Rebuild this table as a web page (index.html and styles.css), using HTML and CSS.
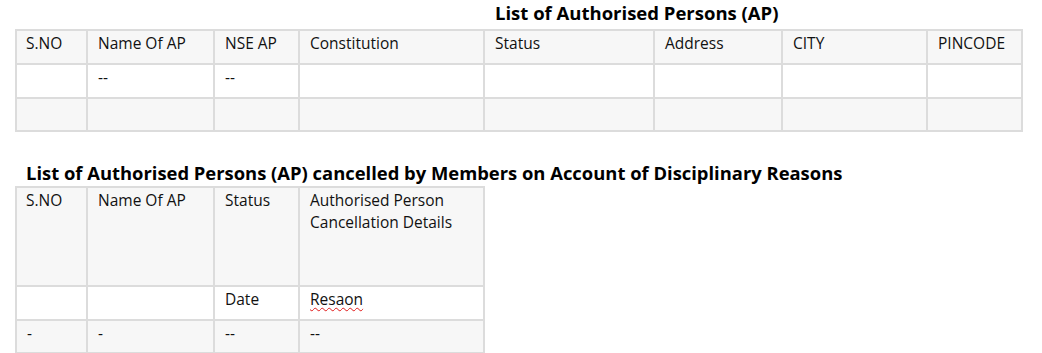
FILE: index.html
```html
<!DOCTYPE html>
<html lang="en">
<head>
<meta charset="utf-8">
<title>List of Authorised Persons (AP)</title>
<link rel="stylesheet" href="styles.css">
</head>
<body>
<div class="page">
  <h2 class="title title-main">List of Authorised Persons (AP)</h2>
  <table class="grid grid-ap">
    <tbody>
      <tr class="row row-head row-h34">
        <td class="c-sno">S.NO</td>
        <td class="c-name">Name Of AP</td>
        <td class="c-nse">NSE AP</td>
        <td class="c-const">Constitution</td>
        <td class="c-status">Status</td>
        <td class="c-addr">Address</td>
        <td class="c-city">CITY</td>
        <td class="c-pin">PINCODE</td>
      </tr>
      <tr class="row row-h34">
        <td></td>
        <td>--</td>
        <td>--</td>
        <td></td>
        <td></td>
        <td></td>
        <td></td>
        <td></td>
      </tr>
      <tr class="row row-alt row-h33">
        <td></td>
        <td></td>
        <td></td>
        <td></td>
        <td></td>
        <td></td>
        <td></td>
        <td></td>
      </tr>
    </tbody>
  </table>

  <h2 class="title title-cancel">List of Authorised Persons (AP) cancelled by Members on Account of Disciplinary Reasons</h2>
  <table class="grid grid-cancel">
    <tbody>
      <tr class="row row-head row-h99">
        <td class="c-sno">S.NO</td>
        <td class="c-name">Name Of AP</td>
        <td class="c-nse">Status</td>
        <td class="c-const">Authorised Person<br>Cancellation Details</td>
      </tr>
      <tr class="row row-h34">
        <td></td>
        <td></td>
        <td>Date</td>
        <td><span class="misspelt">Resaon</span></td>
      </tr>
      <tr class="row row-alt row-h33">
        <td>-</td>
        <td>-</td>
        <td>--</td>
        <td>--</td>
      </tr>
    </tbody>
  </table>
</div>
</body>
</html>
```

FILE: styles.css
```css
html, body {
  margin: 0;
  padding: 0;
  background: #ffffff;
}

body {
  font-family: "Open Sans", Lato, "Liberation Sans", sans-serif;
  font-size: 15.5px;
  color: #111111;
}

.page {
  padding-left: 15px;
}

.title {
  margin: 0;
  font-weight: 700;
  color: #000000;
  white-space: nowrap;
}

.title-main {
  height: 29px;
  padding-left: 480px;
  font-size: 18.5px;
  line-height: 26px;
}

.title-cancel {
  margin-top: 28px;
  height: 26px;
  padding-left: 11px;
  font-size: 18.4px;
  line-height: 25px;
}

.grid {
  border-collapse: separate;
  border-spacing: 0;
  table-layout: fixed;
  border-top: 2px solid #dcdcdc;
  border-left: 2px solid #dcdcdc;
}

.grid-ap {
  width: 1008px;
}

.grid-cancel {
  width: 470px;
}

.grid td {
  box-sizing: border-box;
  border-right: 2px solid #dcdcdc;
  border-bottom: 2px solid #dcdcdc;
  padding: 1px 8px 0 10px;
  vertical-align: top;
  line-height: 22px;
  white-space: nowrap;
}

.grid td.c-sno {
  padding-left: 9px;
}

.row {
  background: #ffffff;
}

.row-head,
.row-alt {
  background: #f7f7f7;
}

.row-h34 { height: 34px; }
.row-h33 { height: 33px; }
.row-h99 { height: 99px; }

.c-sno { width: 71px; }
.c-name { width: 127px; }
.c-nse { width: 85px; }
.c-const { width: 185px; }
.c-status { width: 170px; }
.c-addr { width: 128px; }
.c-city { width: 145px; }
.c-pin { width: 95px; }

.misspelt {
  text-decoration: underline wavy #e01b1b;
  text-decoration-thickness: 1px;
  text-underline-offset: 2px;
}
```
